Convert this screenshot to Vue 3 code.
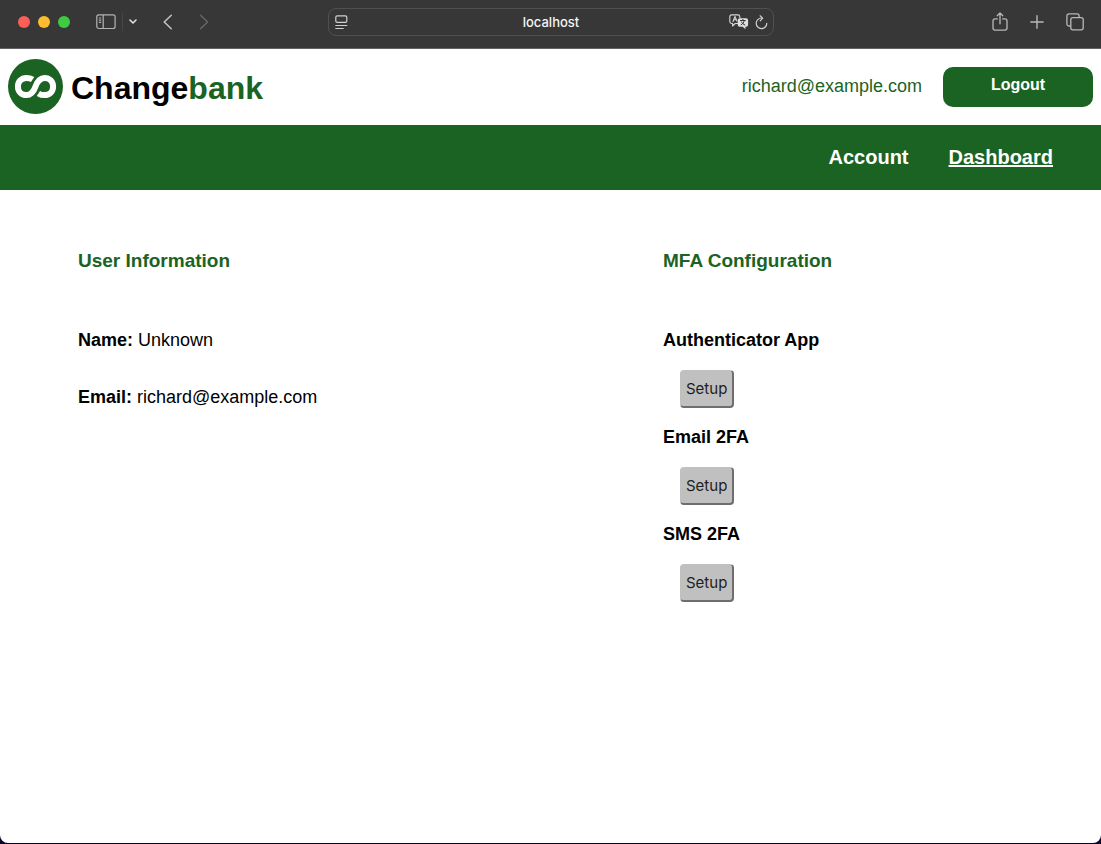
<script setup>
const user = { name: 'Unknown', email: 'richard@example.com' }
const methods = ['Authenticator App', 'Email 2FA', 'SMS 2FA']
</script>

<template>
  <div class="window">
    <div class="toolbar">
      <div class="tools tools-left">
        <div class="lights">
          <button class="light red" aria-label="Close"></button>
          <button class="light yellow" aria-label="Minimize"></button>
          <button class="light green" aria-label="Zoom"></button>
        </div>
        <button class="tool sidebar" aria-label="Show sidebar">
          <svg width="20" height="16" viewBox="0 0 20 16" fill="none" stroke="#b4b4b4" stroke-width="1.2">
            <rect x="0.8" y="0.9" width="18.3" height="13.6" rx="2" />
            <path d="M7.2 1v13.5M2.9 4h2.3M2.9 6.2h2.3M2.9 8.4h2.3" />
          </svg>
        </button>
        <span class="divider"></span>
        <button class="tool chevron" aria-label="Tab groups">
          <svg width="8" height="6" viewBox="0 0 8 6" fill="none" stroke="#e6e6e6" stroke-width="1.5" stroke-linecap="round" stroke-linejoin="round">
            <path d="M1 1l3 3 3-3" />
          </svg>
        </button>
        <button class="tool back" aria-label="Back">
          <svg width="10" height="16" viewBox="0 0 10 16" fill="none" stroke="#c4c4c4" stroke-width="1.5" stroke-linecap="round" stroke-linejoin="round">
            <path d="M8.3 1.2L1.2 8l7.1 6.8" />
          </svg>
        </button>
        <button class="tool" aria-label="Forward" disabled>
          <svg width="10" height="16" viewBox="0 0 10 16" fill="none" stroke="#666" stroke-width="1.5" stroke-linecap="round" stroke-linejoin="round">
            <path d="M1.5 1.2L8.6 8l-7.1 6.8" />
          </svg>
        </button>
      </div>

      <div class="address">
        <button class="tool" aria-label="Page menu">
          <svg width="13" height="15" viewBox="0 0 13 15" fill="none" stroke="#d0d0d0" stroke-width="1.2" stroke-linecap="round">
            <rect x="0.8" y="0.8" width="11" height="6.6" rx="1.4" />
            <path d="M0.8 10.5h11M0.8 13.5h7.4" />
          </svg>
        </button>
        <input class="url" type="text" aria-label="Address" value="localhost" />
        <button class="tool" aria-label="Translate">
          <svg width="20" height="16" viewBox="0 0 20 16" fill="none" stroke-linecap="round" stroke-linejoin="round">
            <path d="M9.5 9.5H6.2L3.6 12V9.5H2.7A1.9 1.9 0 0 1 .8 7.6V2.8A1.9 1.9 0 0 1 2.7.9h6.2a1.9 1.9 0 0 1 1.9 1.9v.9" stroke="#d8d8d8" stroke-width="1.1" />
            <path d="M4 7.5l2-5 1.8 4.4M4.7 5.8h2.6" stroke="#d8d8d8" stroke-width="1.1" />
            <path d="M10.7 4.2h6.4a2 2 0 0 1 2 2v4.5a2 2 0 0 1-2 2h-.7v2.6l-2.7-2.6h-3a2 2 0 0 1-2-2V6.2a2 2 0 0 1 2-2z" fill="#dedede" />
            <path d="M11.5 6.5h4.8M13.9 5.4v1M12.2 10.8c1.7-.9 2.7-2.3 3-4.1M12.5 7.9c.8 1.5 1.8 2.4 3.3 3" stroke="#373737" stroke-width="1" />
          </svg>
        </button>
        <button class="tool" aria-label="Reload">
          <svg width="13" height="15" viewBox="0 0 13 15" fill="none" stroke="#cfcfcf" stroke-width="1.2" stroke-linecap="round" stroke-linejoin="round">
            <path d="M6.5 3a5.3 5.3 0 1 0 5.3 5.3M5.1.8L7.7 3.1 5.2 5.8" />
          </svg>
        </button>
      </div>

      <div class="tools tools-right">
        <button class="tool" aria-label="Share">
          <svg width="16" height="20" viewBox="0 0 16 20" fill="none" stroke="#b8b8b8" stroke-width="1.3" stroke-linecap="round" stroke-linejoin="round">
            <path d="M5.3 6.9H3A2 2 0 0 0 1 8.9v7.2a2 2 0 0 0 2 2h10a2 2 0 0 0 2-2V8.9a2 2 0 0 0-2-2h-2.3M8 11.8V1.2M5.2 3.8L8 1l2.8 2.8" />
          </svg>
        </button>
        <button class="tool" aria-label="New tab">
          <svg width="14" height="14" viewBox="0 0 14 14" fill="none" stroke="#b8b8b8" stroke-width="1.4" stroke-linecap="round">
            <path d="M7 .8v12.4M.8 7h12.4" />
          </svg>
        </button>
        <button class="tool" aria-label="Tab overview">
          <svg width="18" height="18" viewBox="0 0 18 18" fill="none" stroke="#b8b8b8" stroke-width="1.3">
            <rect x="4.8" y="4.6" width="12.4" height="12.2" rx="2" />
            <path d="M4.8 13H2.9a2 2 0 0 1-2-2V2.9a2 2 0 0 1 2-2h8.2a2 2 0 0 1 2 2v1.7" />
          </svg>
        </button>
      </div>
    </div>

    <header class="header">
      <a class="brand" href="#">
        <svg width="55" height="55" viewBox="0 0 55 55" aria-hidden="true">
          <circle cx="27.5" cy="27.5" r="27.5" fill="#1b6323" />
          <path d="M24.6 20.6C22.8 19.4 20.8 18.9 18.4 18.9C13.3 18.9 9.9 22.6 9.9 27.4C9.9 32.3 13.4 36.1 18.4 36.1C23.4 36.1 25.6 33 27.5 27.5C29.4 22 31.6 18.9 36.6 18.9C41.6 18.9 45.1 22.7 45.1 27.6C45.1 32.4 41.7 36.1 36.6 36.1C34.2 36.1 32.2 35.6 30.4 34.4" fill="none" stroke="#fff" stroke-width="6" />
        </svg>
        <span class="wordmark">Change<span class="accent">bank</span></span>
      </a>
      <div class="session">
        <span class="session-email">{{ user.email }}</span>
        <button class="logout">Logout</button>
      </div>
    </header>

    <nav class="nav">
      <a href="#account">Account</a>
      <a class="current" href="#dashboard">Dashboard</a>
    </nav>

    <main class="content">
      <section>
        <h2>User Information</h2>
        <p class="field"><b>Name:</b> {{ user.name }}</p>
        <p class="field"><b>Email:</b> {{ user.email }}</p>
      </section>
      <section>
        <h2>MFA Configuration</h2>
        <div v-for="method in methods" :key="method" class="method">
          <h3>{{ method }}</h3>
          <button class="setup" :aria-label="'Setup ' + method">Setup</button>
        </div>
      </section>
    </main>
  </div>
</template>

<style>
body {
  background: #0c0528;
}
</style>

<style scoped>
.window {
  box-sizing: border-box;
  display: flex;
  flex-direction: column;
  min-height: calc(100vh - 1px);
  overflow: hidden;
  border-radius: 0 0 8px 8px;
  background: #fff;
  color: #000;
  font-family: "Liberation Sans", Arial, sans-serif;
  font-size: 18px;
  line-height: 21px;
}
button {
  margin: 0;
  padding: 0;
  border: 0;
  background: none;
}
.toolbar {
  display: grid;
  grid-template-columns: 1fr minmax(200px, 446px) 1fr;
  align-items: center;
  height: 49px;
  padding-bottom: 4px;
  box-sizing: border-box;
  background: #373737;
  border-bottom: 1px solid #636163;
}
.tools {
  display: flex;
  align-items: center;
}
.tools-left {
  padding-left: 18px;
}
.tools-right {
  justify-content: flex-end;
  gap: 22px;
  padding-right: 17px;
}
.lights {
  display: flex;
  gap: 8px;
  margin-right: 26px;
}
.light {
  width: 12px;
  height: 12px;
  border-radius: 50%;
}
.red { background: #fc5f58; }
.yellow { background: #fdbd2f; }
.green { background: #3ecb43; }
.tool {
  display: flex;
  flex: none;
}
.divider {
  width: 1px;
  height: 18px;
  margin: 0 6px;
  background: #484848;
}
.back {
  margin: 0 26px;
}
.address {
  display: flex;
  align-items: center;
  gap: 6px;
  box-sizing: border-box;
  height: 28px;
  padding: 0 5px 0 6px;
  border: 1px solid #505050;
  border-radius: 8px;
}
.url {
  flex: 1;
  min-width: 0;
  padding: 0 0 0 26px;
  border: 0;
  outline: 0;
  background: none;
  color: #f4f4f4;
  font: 500 13px/16px Inter, sans-serif;
  text-align: center;
}
.header {
  display: flex;
  justify-content: space-between;
  align-items: center;
  height: 75px;
  padding: 0 8px 1px;
}
.brand {
  display: flex;
  align-items: center;
  gap: 8px;
  color: #000;
  text-decoration: none;
}
.wordmark {
  padding-top: 3px;
  font-size: 32px;
  font-weight: bold;
  line-height: 36px;
}
.accent,
.session-email,
h2 {
  color: #1b6323;
}
.session {
  display: flex;
  align-items: center;
  gap: 21px;
}
.logout {
  width: 150px;
  height: 40px;
  padding-bottom: 3px;
  border-radius: 10px;
  background: #1b6323;
  color: #fff;
  font: bold 16px/20px "Liberation Sans", Arial, sans-serif;
}
.nav {
  display: flex;
  justify-content: flex-end;
  align-items: center;
  gap: 40px;
  height: 65px;
  padding-right: 48px;
  background: #1b6323;
  font-size: 20px;
  font-weight: bold;
}
.nav a {
  color: #fff;
  text-decoration: none;
}
.nav .current {
  text-decoration: underline;
}
.content {
  display: grid;
  grid-template-columns: 1fr 1fr;
  gap: 225px;
  padding: 60px 78px;
}
h2 {
  margin: 0 0 58px;
  font-size: 19px;
  line-height: 22px;
}
.field {
  margin: 0 0 36px;
}
.method h3 {
  margin: 0;
  font-size: 18px;
  line-height: 21px;
}
.setup {
  display: block;
  margin: 19px 17px;
  padding: 8px 5px 7px;
  border: 1px solid #c0c0c0;
  border-right: 2px solid #6e6e6e;
  border-bottom: 2px solid #6e6e6e;
  border-radius: 4px;
  background: #c0c0c0;
  color: #1d1d1d;
  font: 15px/20px Inter, sans-serif;
}
</style>
